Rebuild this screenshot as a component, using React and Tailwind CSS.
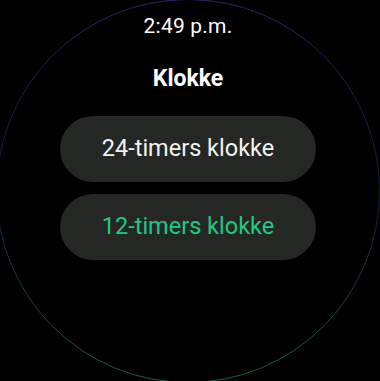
import React from "react";

export default function App() {
  return (
    <div
      className="relative w-[380px] h-[381px] bg-black overflow-hidden"
      style={{ fontFamily: "Roboto, 'Noto Sans', sans-serif" }}
    >
      <svg
        className="absolute left-0 top-0 pointer-events-none"
        width="380"
        height="381"
        viewBox="0 0 380 381"
      >
        <defs>
          <linearGradient id="ring" x1="0" y1="0" x2="0" y2="1">
            <stop offset="0" stopColor="#2a2566" />
            <stop offset="0.5" stopColor="#141a40" />
            <stop offset="1" stopColor="#17604f" />
          </linearGradient>
        </defs>
        <circle cx="188" cy="191" r="191.5" fill="none" stroke="url(#ring)" strokeWidth="1" />
      </svg>
      <div className="relative flex flex-col items-center pr-[4px]">
        <div className="mt-[14px] h-[24px] leading-[24px] text-[21px] text-white tracking-[0.2px]">
          2:49 p.m.
        </div>
        <div className="mt-[27px] h-[28px] leading-[28px] text-[23px] font-bold text-white">
          Klokke
        </div>
        <div className="mt-[23px] flex flex-col gap-[12px]">
          <div className="w-[256px] h-[66px] rounded-full bg-[#252725] flex items-center justify-center text-[23.5px] text-[#f2f2f2]">
            24-timers klokke
          </div>
          <div className="w-[256px] h-[66px] rounded-full bg-[#252725] flex items-center justify-center text-[23.5px] text-[#1fc983]">
            12-timers klokke
          </div>
        </div>
      </div>
    </div>
  );
}
